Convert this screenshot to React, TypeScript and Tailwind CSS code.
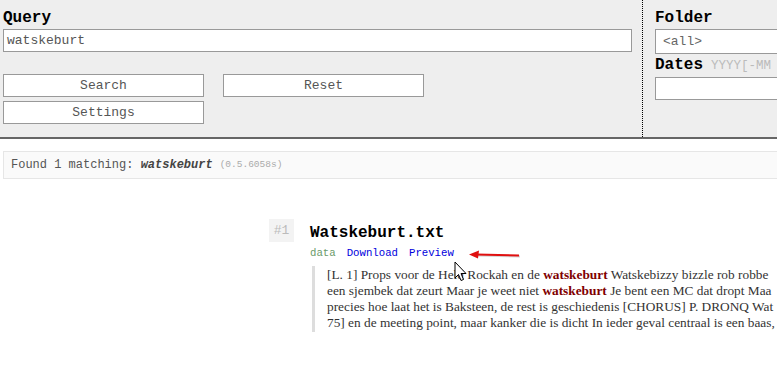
import React from 'react';

const mono = "font-['Liberation_Mono','Courier_New',monospace]";

function Hit({ children }: { children: React.ReactNode }) {
    return <b className="text-[#800000]">{children}</b>;
}

export default function App() {
    return (
        <div className={`w-[777px] h-[378px] overflow-hidden bg-white relative ${mono}`}>
            {/* Search header */}
            <div className="flex h-[139px] bg-[#eeeeee] border-b-2 border-[#666]">
                <div className="w-[642px] shrink-0 pl-[3px] pt-[7px]">
                    <div className="text-[16px] leading-[22px] font-bold text-black">Query</div>
                    <div className="w-[629px] h-[23px] bg-white border border-[#999] text-[13px] leading-[21px] text-[#555] pl-[3px]">
                        watskeburt
                    </div>
                    <div className="grid grid-cols-[201px_201px] gap-x-[19px] gap-y-[4px] mt-[22px]">
                        <button className="h-[23px] bg-white border border-[#999] text-[13px] text-[#555]">Search</button>
                        <button className="h-[23px] bg-white border border-[#999] text-[13px] text-[#555]">Reset</button>
                        <button className="h-[23px] bg-white border border-[#999] text-[13px] text-[#555]">Settings</button>
                    </div>
                </div>
                <div className="border-l border-dotted border-black h-[137px]" />
                <div className="flex-1 pl-[12px] pt-[7px] min-w-0">
                    <div className="text-[16px] leading-[22px] font-bold text-black">Folder</div>
                    <div className="w-[200px] h-[25px] bg-white border border-[#999] text-[13px] leading-[23px] text-[#666] pl-[7px]">
                        &lt;all&gt;
                    </div>
                    <div className="flex items-baseline gap-[8px] leading-[22px] whitespace-nowrap">
                        <span className="text-[16px] font-bold text-black">Dates</span>
                        <span className="text-[12.5px] text-[#bbb]">YYYY[-MM</span>
                    </div>
                    <div className="w-[200px] h-[23px] bg-white border border-[#999]" />
                </div>
            </div>

            {/* Status */}
            <div className="pl-[3px] pt-[12px]">
                <div className="w-[800px] h-[28px] bg-[#fafafa] border border-[#e6e6e6] pl-[7px] flex items-center text-[12px] text-[#555] whitespace-nowrap">
                    Found 1 matching:&nbsp;<b className="italic text-[#444]">watskeburt</b>
                    <span className="text-[9.5px] text-[#aaa] ml-[7px]">(0.5.6058s)</span>
                </div>
            </div>

            {/* Result */}
            <div className="flex gap-[16px] pl-[269px] mt-[40px]">
                <div className="w-[25px] h-[23px] bg-[#f3f3f3] text-[13px] text-[#bbb] flex items-center justify-center shrink-0">#1</div>
                <div className="min-w-0">
                    <div className="text-[16px] leading-[22px] font-bold text-black mt-[3px]">Watskeburt.txt</div>
                    <div className="flex gap-[11px] text-[10.7px] leading-[14px] mt-[2px] whitespace-nowrap">
                        <span className="text-[#6a9a6a]">data</span>
                        <a className="text-[#0000dd]">Download</a>
                        <a className="text-[#0000dd]">Preview</a>
                    </div>
                    <div className="mt-[6px] ml-[2px] border-l-[3px] border-[#dddddd] pl-[12px] py-[1px] font-['Liberation_Serif','Times_New_Roman',serif] text-[13.33px] leading-[16px] text-[#333] whitespace-nowrap">
                        <div>[L. 1] Props voor de Held Rockah en de <Hit>watskeburt</Hit> Watskebizzy bizzle rob robbe</div>
                        <div>een sjembek dat zeurt Maar je weet niet <Hit>watskeburt</Hit> Je bent een MC dat dropt Maa</div>
                        <div>precies hoe laat het is Baksteen, de rest is geschiedenis [CHORUS] P. DRONQ Wat</div>
                        <div>75] en de meeting point, maar kanker die is dicht In ieder geval centraal is een baas,</div>
                    </div>
                </div>
            </div>

            {/* Red annotation arrow */}
            <svg className="absolute left-[466px] top-[248px]" width="58" height="14" viewBox="0 0 58 14">
                <line x1="10" y1="7.5" x2="54" y2="8.5" stroke="#999" strokeOpacity="0.4" strokeWidth="2" />
                <line x1="10" y1="6.5" x2="53" y2="7.5" stroke="#e01010" strokeWidth="2" />
                <path d="M3 6.5 L13 2.5 L12 10.5 Z" fill="#e01010" />
            </svg>

            {/* Mouse cursor */}
            <svg className="absolute left-[454px] top-[261px]" width="14" height="22" viewBox="0 0 14 22">
                <path d="M1 1 L1 17 L4.5 13.5 L7 19.5 L9.5 18.5 L7 12.5 L12 12.5 Z" fill="white" stroke="black" strokeWidth="1" strokeLinejoin="round" />
            </svg>
        </div>
    );
}
